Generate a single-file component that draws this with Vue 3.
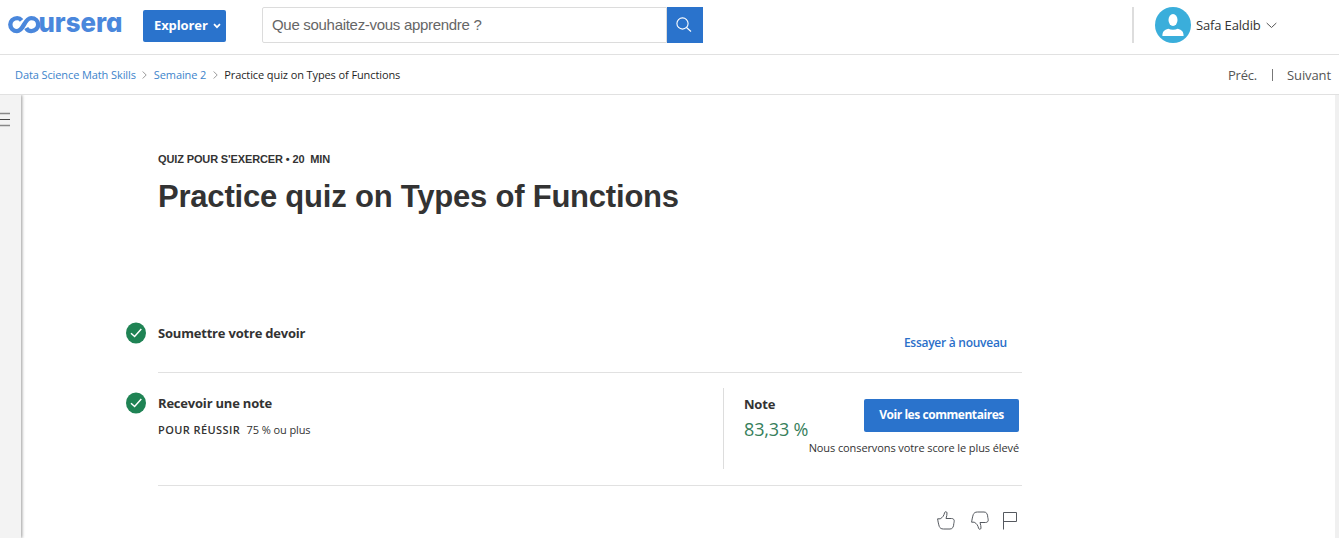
<script setup>
const steps = [
  { title: 'Soumettre votre devoir', key: 'submit' },
  { title: 'Recevoir une note', key: 'grade' },
]
</script>

<template>
  <div class="page">
    <header class="top">
      <svg class="logo" width="116" height="38" viewBox="0 -8 116 38" role="img" aria-label="coursera">
        <path d="M13.600 5.400C12.300 3.800 11 3.100 9.200 3.100C5.200 3.100 2.300 6 2.300 9.600S5.200 16.100 9 16.100C16 16.100 16 3.100 23.200 3.100C27.200 3.100 30.200 6 30.200 9.600S27.200 16.100 23.200 16.100C20.900 16.100 19.300 15 18.200 12.900" fill="none" stroke="#4a87dc" stroke-width="4.400" />
        <text x="30.500" y="17.300" textLength="84" lengthAdjust="spacingAndGlyphs">ursera</text>
      </svg>
      <button class="explore">
        Explorer
        <svg width="8" height="6" viewBox="0 0 8 6"><path d="M1 1.200L4 4.200L7 1.200" fill="none" stroke="#fff" stroke-width="1.700" /></svg>
      </button>
      <div class="search">
        <div class="field">Que souhaitez-vous apprendre ?</div>
        <button class="go">
          <svg width="16" height="16" viewBox="0 0 16 16" fill="none" stroke="#fff" stroke-width="1.100"><circle cx="6.500" cy="6.500" r="5.600" /><path d="M10.500 10.500L15 14.500" /></svg>
        </button>
      </div>
      <div class="user">
        <svg width="36" height="36" viewBox="0 0 36 36">
          <circle cx="18" cy="18" r="18" fill="#3aaedb" />
          <ellipse cx="18" cy="13" rx="4.500" ry="5.900" fill="#fff" />
          <path d="M7.400 29C7.400 24.500 9 23 13.300 21.700C16 23.200 20 23.200 22.700 21.700C27 23 28.600 24.500 28.600 29Z" fill="#fff" />
        </svg>
        <span class="name">Safa Ealdib</span>
        <svg width="11" height="7" viewBox="0 0 11 7"><path d="M.7 1L5.500 5.500L10.300 1" fill="none" stroke="#555" /></svg>
      </div>
    </header>

    <nav class="crumbs">
      <a class="c1">Data Science Math Skills</a>
      <svg width="5" height="8" viewBox="0 0 5 8"><path d="M.7 .5L4.200 4L.7 7.500" fill="none" stroke="#999" /></svg>
      <a class="c2">Semaine 2</a>
      <svg width="5" height="8" viewBox="0 0 5 8"><path d="M.7 .5L4.200 4L.7 7.500" fill="none" stroke="#999" /></svg>
      <span class="c3">Practice quiz on Types of Functions</span>
      <div class="pager"><span class="prev">Préc.</span><i></i><span class="next">Suivant</span></div>
    </nav>

    <div class="body">
      <aside>
        <svg width="10" height="15" viewBox="0 0 10 15"><path d="M0 1.500H10M0 13.500H10" stroke="#888" stroke-width="1.300" /><path d="M0 7.500H10" stroke="#444" /></svg>
      </aside>
      <main>
        <div class="kind">QUIZ POUR S'EXERCER • 20&nbsp; MIN</div>
        <h1>Practice quiz on Types of Functions</h1>

        <section v-for="s in steps" :key="s.key" :class="['step', s.key]">
          <svg class="check" width="20" height="22" viewBox="0 0 20 22">
            <ellipse cx="10" cy="11" rx="10" ry="10.600" fill="#1f8354" />
            <path d="M5 11.200L8.600 14.500L15.300 7" fill="none" stroke="#fff" stroke-width="1.500" />
          </svg>
          <div class="info">
            <h2>{{ s.title }}</h2>
            <p v-if="s.key === 'grade'"><b>POUR RÉUSSIR</b><span>75 % ou plus</span></p>
          </div>
          <a v-if="s.key === 'submit'" class="retry">Essayer à nouveau</a>
          <div v-else class="score">
            <div class="row">
              <div>
                <h2 class="note">Note</h2>
                <div class="value">83,33 %</div>
              </div>
              <button class="view">Voir les commentaires</button>
            </div>
            <div class="keep">Nous conservons votre score le plus élevé</div>
          </div>
        </section>

        <div class="feedback">
          <svg width="18" height="19" viewBox="0 0 18 19"><path d="M.6 7.800H3.200C5.800 6.400 7 4.500 7.600 1.600C7.900 .4 9.900 .4 10 1.900C10.100 3.500 9.600 5.500 9 7.500H14.500C16.500 7.500 17.400 8.800 17.200 10.300C17.200 11.500 16.800 12 16.800 12.500C16.700 15.900 15.600 18 13 18H6.500C4 18 3 17 2.300 15.500C1.600 13.500 1 10.500 .6 7.800Z" /></svg>
          <svg width="18" height="19" viewBox="0 0 18 19"><path d="M.6 11.200H3.200C5.800 12.600 7 14.500 7.600 17.400C7.900 18.600 9.900 18.600 10 17.100C10.100 15.500 9.600 13.500 9 11.500H14.500C16.500 11.500 17.400 10.200 17.200 8.700C17.200 7.500 16.800 7 16.800 6.500C16.700 3.100 15.600 1 13 1H6.500C4 1 3 2 2.300 3.500C1.600 5.500 1 8.500 .6 11.200Z" /></svg>
          <svg width="14" height="19" viewBox="0 0 14 19"><path d="M.5 18.500V1.500H13.500V10.500H.5" /></svg>
        </div>
      </main>
      <div class="edge"></div>
    </div>
  </div>
</template>

<style>
body { overflow: hidden; background: #fff; }
</style>

<style scoped>
* { box-sizing: border-box; }
.page { width: 1339px; height: 538px; overflow: hidden; display: flex; flex-direction: column; font-family: "Open Sans", sans-serif; color: #333; background: #fff; white-space: nowrap; }
svg { display: block; flex: none; }
button { border: 0; padding: 0; font-family: inherit; color: #fff; background: #2a73cc; }
.top { height: 55px; flex: none; border-bottom: 1px solid #e1e1e1; display: flex; align-items: flex-start; padding-left: 8px; }
.logo { margin-top: 7px; overflow: visible; }
.logo text { font: 800 27.500px Inter, sans-serif; font-feature-settings: "cv11"; fill: #4a87dc; }
.explore { width: 83px; height: 32px; margin: 10px 0 0 19px; border-radius: 2px; display: flex; align-items: center; padding: 0 0 2px 11px; gap: 5px; font-size: 13px; font-weight: 700; letter-spacing: -.1px; }
.explore svg { margin-top: 2px; }
.search { display: flex; margin: 7px 0 0 36px; height: 36px; width: 441px; }
.field { flex: 1; border: 1px solid #dcdcdc; border-radius: 2px 0 0 2px; padding-left: 9px; font: 15px/34px "Liberation Sans", sans-serif; letter-spacing: -.3px; color: #666; }
.go { width: 36px; display: flex; align-items: center; justify-content: center; padding-right: 3px; }
.user { margin: 7px 0 0 429px; height: 36px; border-left: 2px solid #ddd; padding-left: 21px; display: flex; align-items: center; }
.name { margin: 0 5px 0 5px; font-size: 13px; letter-spacing: -.15px; }
.crumbs { height: 40px; flex: none; border-bottom: 1px solid #e1e1e1; display: flex; align-items: center; padding: 0 8px 0 15px; gap: 6.500px; font-size: 11px; letter-spacing: -.1px; }
.crumbs a { color: #3d84cb; }
.c3 { color: #1f1f1f; }
.pager { margin-left: auto; display: flex; align-items: center; font-size: 13px; color: #555; }
.pager i { width: 1px; height: 12px; background: #777; margin: 0 14px 0 15px; }
.prev { letter-spacing: -.2px; }
.body { flex: 1; display: flex; min-height: 0; }
aside { width: 21px; background: #f3f3f3; box-shadow: 1px 0 3px rgba(0,0,0,.4); padding-top: 17px; clip-path: inset(0 -8px 0 0); }
main { flex: 1; padding: 56px 0 0 105px; }
.edge { width: 4px; background: #f0f0f0; }
.kind { margin-left: 32px; height: 16px; font: 700 11px/16px "Liberation Sans", sans-serif; letter-spacing: -.13px; }
h1 { margin: 12px 0 0 32px; font: 700 31px/36px "Liberation Sans", sans-serif; letter-spacing: -.21px; }
h2 { margin: 0; font-size: 13px; line-height: 18px; font-weight: 700; letter-spacing: -.2px; }
.step { display: flex; width: 896px; }
.submit { margin-top: 107px; height: 51px; }
.check { margin-right: 12px; }
.info { flex: 1; }
.submit .info, .submit .retry { height: 51px; border-bottom: 1px solid #e1e1e1; }
.submit h2 { margin-top: 2px; }
.retry { padding: 12px 15px 0 0; font-size: 12px; line-height: 18px; font-weight: 600; letter-spacing: -.26px; color: #2a6fc9; }
.grade { height: 113px; }
.grade .check { margin-top: 19px; }
.grade .info { border-bottom: 1px solid #e1e1e1; padding-top: 21px; }
.grade p { margin: 9px 0 0; display: flex; gap: 6.500px; font-size: 11px; line-height: 17px; }
.grade p b { font-weight: 600; letter-spacing: .4px; }
.grade p span { letter-spacing: -.1px; }
.score { width: 299px; border-bottom: 1px solid #e1e1e1; padding: 15px 3px 0 0; }
.row { display: flex; justify-content: space-between; height: 81px; border-left: 1px solid #ddd; padding: 7px 0 0 20px; }
.value { margin-top: 3px; font-size: 18px; line-height: 26px; letter-spacing: -.15px; color: #37805c; }
.view { width: 155px; height: 33px; margin-top: 4px; padding-bottom: 2px; border-radius: 2px; font-size: 12px; font-weight: 700; letter-spacing: -.45px; }
.keep { margin-top: -29px; text-align: right; font-size: 11px; line-height: 16px; letter-spacing: -.1px; }
.feedback { margin: 25px 0 0 811px; display: flex; gap: 16px; }
.feedback svg { fill: none; stroke: #55595f; }
.feedback svg:last-child { margin-left: -2px; }
</style>
